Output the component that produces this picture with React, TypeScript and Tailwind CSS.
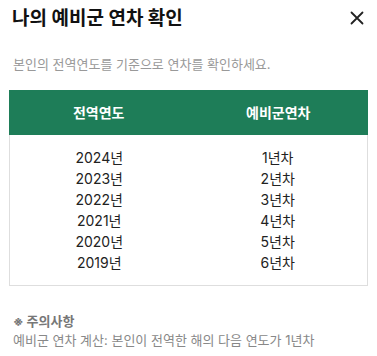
const rows = [
  { year: '2024년', grade: '1년차' },
  { year: '2023년', grade: '2년차' },
  { year: '2022년', grade: '3년차' },
  { year: '2021년', grade: '4년차' },
  { year: '2020년', grade: '5년차' },
  { year: '2019년', grade: '6년차' },
]

export default function App() {
  return (
    <div className="w-[377px] h-[356px] bg-white px-[9px] font-['Inter','Noto_Sans_CJK_KR',sans-serif] overflow-hidden">
      <div className="flex items-center justify-between h-[36px] pl-[3px] pr-[4px]">
        <h1 className="text-[19px] font-bold text-[#111] leading-none">나의 예비군 연차 확인</h1>
        <svg width="14" height="14" viewBox="0 0 14 14" className="text-[#222]">
          <path d="M1.5 1.5 L12.5 12.5 M12.5 1.5 L1.5 12.5" stroke="currentColor" strokeWidth="1.8" strokeLinecap="round" />
        </svg>
      </div>

      <p className="mt-[19px] pl-[4px] text-[13px] text-[#999] leading-[18px]">본인의 전역연도를 기준으로 연차를 확인하세요.</p>

      <div className="mt-[17px] border border-[#dedede] border-t-0">
        <div className="grid grid-cols-2 h-[45px] bg-[#1e7d58] -mx-px items-center text-white text-[14px] font-bold text-center">
          <div>전역연도</div>
          <div>예비군연차</div>
        </div>
        <div className="py-[12px]">
          {rows.map((r) => (
            <div key={r.year} className="grid grid-cols-2 text-center text-[14px] leading-[21px] text-[#222]">
              <div>{r.year}</div>
              <div>{r.grade}</div>
            </div>
          ))}
        </div>
      </div>

      <div className="mt-[26px] pl-[4px] text-[13px] leading-[19px]">
        <div className="font-bold text-[#777]">※ 주의사항</div>
        <div className="text-[#888]">예비군 연차 계산: 본인이 전역한 해의 다음 연도가 1년차</div>
      </div>
    </div>
  )
}
